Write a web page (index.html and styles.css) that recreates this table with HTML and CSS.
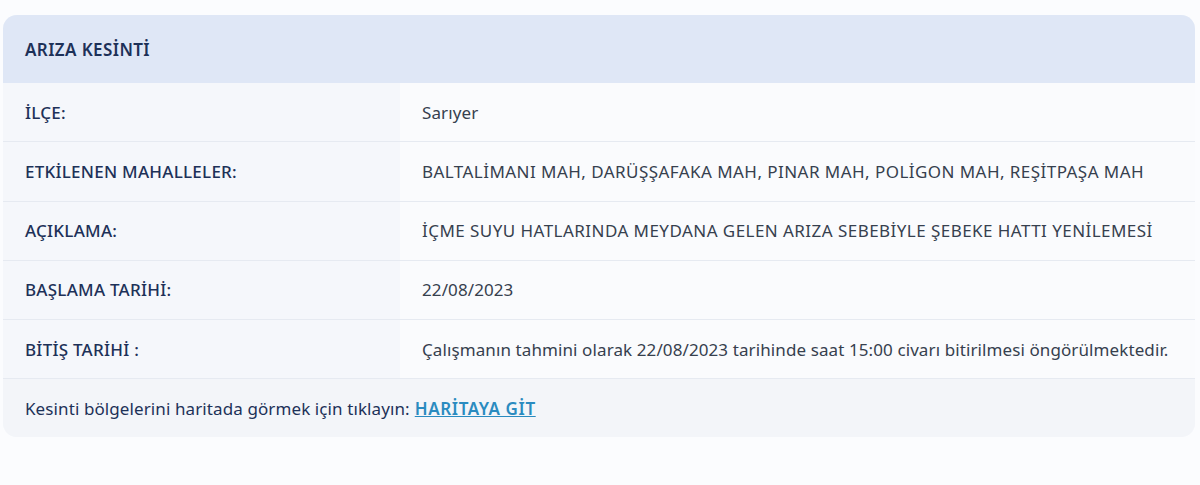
FILE: index.html
```html
<!DOCTYPE html>
<html lang="tr">
<head>
  <meta charset="utf-8">
  <title>Arıza Kesinti</title>
  <link rel="stylesheet" href="styles.css">
</head>
<body>
  <div class="outage-card">
    <div class="outage-head">ARIZA KESİNTİ</div>
    <div class="outage-row">
      <div class="label">İLÇE:</div>
      <div class="value">Sarıyer</div>
    </div>
    <div class="outage-row">
      <div class="label">ETKİLENEN MAHALLELER:</div>
      <div class="value caps">BALTALİMANI MAH, DARÜŞŞAFAKA MAH, PINAR MAH, POLİGON MAH, REŞİTPAŞA MAH</div>
    </div>
    <div class="outage-row">
      <div class="label">AÇIKLAMA:</div>
      <div class="value caps">İÇME SUYU HATLARINDA MEYDANA GELEN ARIZA SEBEBİYLE ŞEBEKE HATTI YENİLEMESİ</div>
    </div>
    <div class="outage-row">
      <div class="label">BAŞLAMA TARİHİ:</div>
      <div class="value">22/08/2023</div>
    </div>
    <div class="outage-row">
      <div class="label">BİTİŞ TARİHİ :</div>
      <div class="value">Çalışmanın tahmini olarak 22/08/2023 tarihinde saat 15:00 civarı bitirilmesi öngörülmektedir.</div>
    </div>
    <div class="outage-foot">
      Kesinti bölgelerini haritada görmek için tıklayın: <a href="#">HARİTAYA GİT</a>
    </div>
  </div>
</body>
</html>
```

FILE: styles.css
```css
body {
  margin: 0;
  padding: 15px 5px 0 3px;
  background: #fbfcfe;
  font-family: "Noto Sans", sans-serif;
  color: #2f3b4c;
  letter-spacing: 0.1px;
}
.outage-card {
  border-radius: 14px;
  overflow: hidden;
  background: #f5f7fb;
}
.outage-head {
  height: 68px;
  display: flex;
  align-items: center;
  padding-left: 22px;
  background: #dfe7f6;
  color: #1d3158;
  font-weight: 600;
  font-size: 17px;
  letter-spacing: 0.4px;
}
.outage-row {
  display: flex;
  height: 58.25px;
  border-bottom: 1px solid #e6eaf1;
  font-size: 17px;
}
.outage-row .label {
  width: 375px;
  padding-left: 22px;
  display: flex;
  align-items: center;
  background: #f5f7fb;
  color: #1d3158;
  font-weight: 500;
  letter-spacing: 0.25px;
}
.outage-row .value {
  flex: 1;
  padding-left: 22px;
  display: flex;
  align-items: center;
  background: #fafbfd;
  color: #36404e;
}
.outage-row .value.caps {
  letter-spacing: 0.45px;
}
.outage-foot {
  height: 58px;
  display: flex;
  align-items: center;
  padding-left: 22px;
  gap: 5px;
  font-size: 17px;
  color: #1d3158;
  background: #f3f5f9;
}
.outage-foot a {
  color: #2a8bc0;
  font-weight: 600;
  letter-spacing: 0.6px;
  text-decoration: underline;
}
```
